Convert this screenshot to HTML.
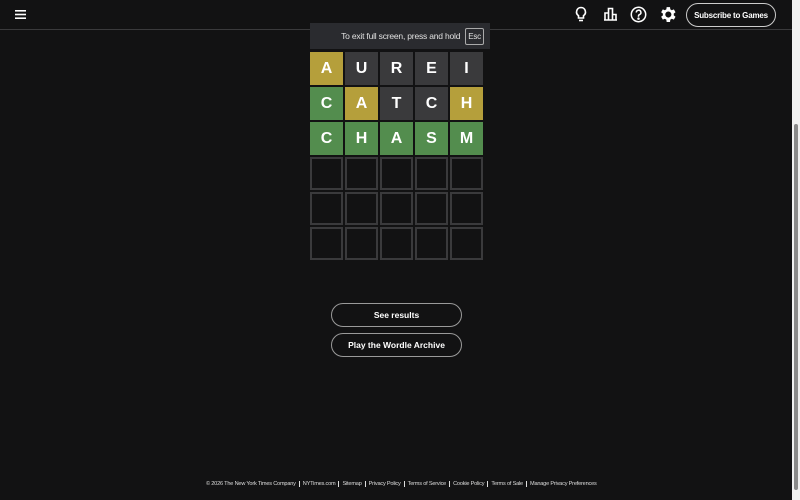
<!DOCTYPE html>
<html><head><meta charset="utf-8"><style>
*{box-sizing:border-box;margin:0;padding:0}
body{width:800px;height:500px;overflow:hidden;background:#121213;font-family:"Liberation Sans",sans-serif;color:#fff;position:relative}
.hdr{position:absolute;left:0;top:0;width:792px;height:30px;border-bottom:1px solid #3a3a3c}
.sb{position:absolute;right:0;top:0;width:8px;height:500px;background:#f1f1f1}
.thumb{position:absolute;left:2px;top:124px;width:4px;height:366px;background:#8a8a8a;border-radius:2px}
.grid{position:absolute;left:310px;top:52px}
.t{position:absolute;width:33px;height:33px;display:flex;align-items:center;justify-content:center;font-weight:bold;font-size:16px}
.e{border:2px solid #3a3a3c}
.y{background:#b59f3b}.g{background:#538d4e}.k{background:#3a3a3c}
.btn{position:absolute;left:331px;width:131px;height:24px;border:1px solid #9a9a9a;border-radius:12px;font-size:8.5px;font-weight:bold;display:flex;align-items:center;justify-content:center}
.ov{position:absolute;left:310px;top:23px;width:180px;height:26px;background:#2a2b2f;font-size:8.5px;color:#e0e0e0;display:flex;align-items:center;justify-content:flex-end;padding-right:6px;letter-spacing:-0.2px}
.esc{border:1px solid #aaa;border-radius:2px;padding:3px 2px;margin-left:5px;font-size:8px}
.ft{position:absolute;top:481px;left:206px;font-size:5.6px;color:#ddd;white-space:nowrap;letter-spacing:-0.2px}
.ft span{border-left:1px solid #ddd;margin-left:3px;padding-left:3px}
</style></head><body>
<div class="hdr">
<svg style="position:absolute;left:15px;top:10px" width="11" height="9"><rect y="0" width="11" height="1.6" fill="#fff"/><rect y="3.7" width="11" height="1.6" fill="#fff"/><rect y="7.4" width="11" height="1.6" fill="#fff"/></svg>
<svg style="position:absolute;left:574px;top:6px" width="14" height="17" viewBox="0 0 14 17" fill="none" stroke="#fff" stroke-width="1.6"><path d="M7 1.5a4.5 4.5 0 0 0-2.5 8.2V12h5V9.7A4.5 4.5 0 0 0 7 1.5z"/><path d="M5 14.5h4"/></svg>
<svg style="position:absolute;left:603px;top:7px" width="15" height="14" viewBox="0 0 15 14" fill="none" stroke="#fff" stroke-width="1.6"><path d="M1 13h13M2 13V6h3.5v7M5.5 13V1.5h4V13M9.5 13V7.5h3.5V13"/></svg>
<svg style="position:absolute;left:630px;top:6px" width="17" height="17" viewBox="0 0 17 17" fill="none" stroke="#fff" stroke-width="1.5"><circle cx="8.5" cy="8.5" r="7.2"/><path d="M6.3 6.5a2.3 2.3 0 1 1 3.2 2.1c-.7.3-1 .8-1 1.5v.6"/><circle cx="8.5" cy="12.6" r=".5" fill="#fff"/></svg>
<svg style="position:absolute;left:657px;top:4px" width="21" height="21" viewBox="0 0 24 24"><path fill="#fff" d="M19.14 12.94a7.1 7.1 0 0 0 0-1.88l2.03-1.58-1.92-3.32-2.39.96a7 7 0 0 0-1.63-.94L14.87 3.5h-3.84l-.36 2.68c-.59.24-1.130.56-1.63.94l-2.39-.96-1.92 3.32 2.03 1.58a7.1 7.1 0 0 0 0 1.880l-2.03 1.58 1.92 3.32 2.39-.96c.5.38 1.04.7 1.63.94l.36 2.68h3.84l.36-2.68c.59-.24 1.13-.56 1.63-.94l2.39.96 1.92-3.32zM12.95 15.5a3.5 3.5 0 1 1 0-7 3.5 3.5 0 0 1 0 7z"/></svg>
<div style="position:absolute;left:686px;top:3px;width:90px;height:24px;border:1px solid #ccc;border-radius:12px;font-size:8px;font-weight:bold;display:flex;align-items:center;justify-content:center;letter-spacing:-0.2px">Subscribe to Games</div>
</div>
<div class="ov">To exit full screen, press and hold <span class="esc">Esc</span></div>
<div class="grid">
<div class="t y" style="left:0;top:0">A</div><div class="t k" style="left:35px;top:0">U</div><div class="t k" style="left:70px;top:0">R</div><div class="t k" style="left:105px;top:0">E</div><div class="t k" style="left:140px;top:0">I</div>
<div class="t g" style="left:0;top:35px">C</div><div class="t y" style="left:35px;top:35px">A</div><div class="t k" style="left:70px;top:35px">T</div><div class="t k" style="left:105px;top:35px">C</div><div class="t y" style="left:140px;top:35px">H</div>
<div class="t g" style="left:0;top:70px">C</div><div class="t g" style="left:35px;top:70px">H</div><div class="t g" style="left:70px;top:70px">A</div><div class="t g" style="left:105px;top:70px">S</div><div class="t g" style="left:140px;top:70px">M</div>
<div class="t e" style="left:0;top:105px"></div><div class="t e" style="left:35px;top:105px"></div><div class="t e" style="left:70px;top:105px"></div><div class="t e" style="left:105px;top:105px"></div><div class="t e" style="left:140px;top:105px"></div>
<div class="t e" style="left:0;top:140px"></div><div class="t e" style="left:35px;top:140px"></div><div class="t e" style="left:70px;top:140px"></div><div class="t e" style="left:105px;top:140px"></div><div class="t e" style="left:140px;top:140px"></div>
<div class="t e" style="left:0;top:175px"></div><div class="t e" style="left:35px;top:175px"></div><div class="t e" style="left:70px;top:175px"></div><div class="t e" style="left:105px;top:175px"></div><div class="t e" style="left:140px;top:175px"></div>
</div>
<div class="btn" style="top:303px">See results</div>
<div class="btn" style="top:333px">Play the Wordle Archive</div>
<div class="ft">© 2026 The New York Times Company<span>NYTimes.com</span><span>Sitemap</span><span>Privacy Policy</span><span>Terms of Service</span><span>Cookie Policy</span><span>Terms of Sale</span><span>Manage Privacy Preferences</span></div>
<div class="sb"><div class="thumb"></div></div>
</body></html>
